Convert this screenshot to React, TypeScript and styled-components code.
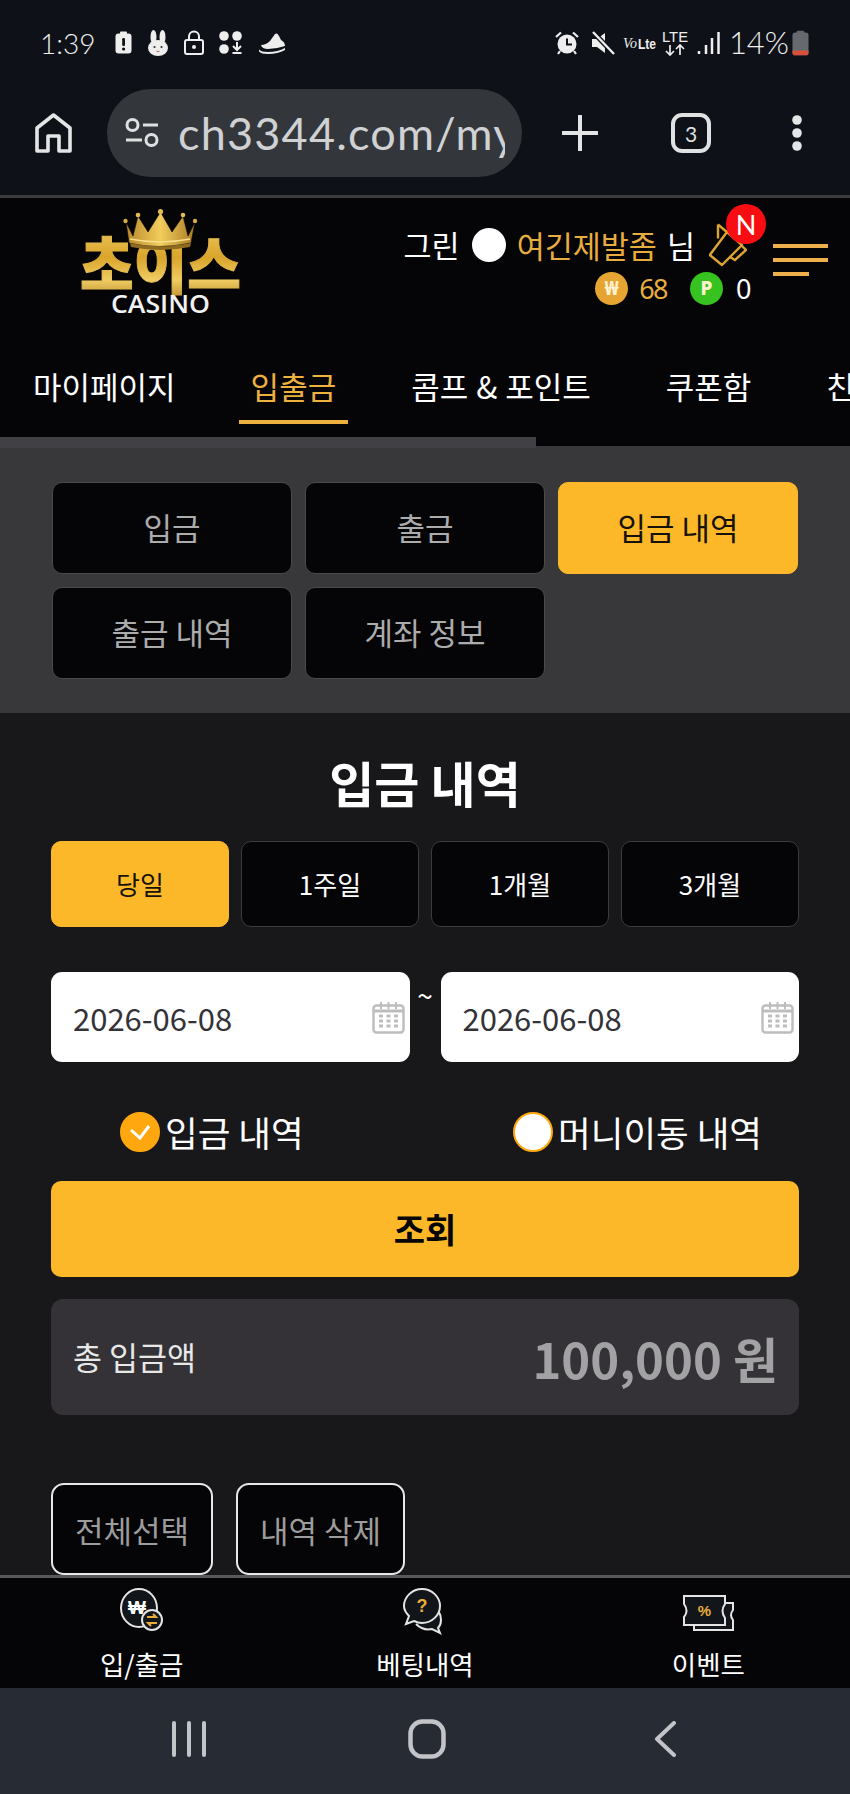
import React from 'react';
import styled, { createGlobalStyle } from 'styled-components';

const KR = `"Noto Sans CJK KR", "Noto Sans", sans-serif`;
const GOLD = '#fdb829';

const GlobalStyle = createGlobalStyle`
    html, body {
        margin: 0;
        padding: 0;
        background: #18171a;
    }
    * {
        box-sizing: border-box;
    }
`

const Page = styled.div`
    width: 850px;
    height: 1794px;
    display: flex;
    flex-direction: column;
    overflow: hidden;
    font-family: ${KR};
    color: #fff;
`

const StatusBar = styled.div`
    height: 89px;
    padding: 0 41px 4px 40px;
    background: #0e1117;
    display: flex;
    align-items: center;
    justify-content: space-between;
    font-family: "Lato", sans-serif;
    font-weight: 300;
    color: #f0f0f0;
`

const StatusLeft = styled.div`
    display: flex;
    align-items: center;
    gap: 15px;
`

const StatusRight = styled.div`
    display: flex;
    align-items: center;
    gap: 8px;
`

const Clock = styled.span`
    font-size: 28px;
    line-height: 1;
    margin-right: 5px;
`

const BatteryText = styled.span`
    font-size: 31px;
    line-height: 1;
    margin: 0 -5px 0 1px;
`

const Toolbar = styled.div`
    height: 109px;
    padding-left: 35px;
    background: #0e1117;
    border-bottom: 3px solid #3c3c3e;
    display: flex;
    align-items: flex-start;
`

const ToolRow = styled.div`
    height: 88px;
    display: flex;
    align-items: center;
`

const UrlPill = styled.div`
    width: 415px;
    height: 88px;
    margin: 0 40px 0 35px;
    padding: 0 17px 0 18px;
    border-radius: 44px;
    background: #33373c;
    display: flex;
    align-items: center;
    gap: 19px;
`

const UrlText = styled.div`
    flex: 1;
    overflow: hidden;
    white-space: nowrap;
    font-family: "Lato", sans-serif;
    font-weight: 400;
    font-size: 45px;
    letter-spacing: 1.2px;
    color: #cfd1d3;
`

const TabCount = styled.div`
    width: 40px;
    height: 40px;
    margin: 0 81px 0 73px;
    border: 4px solid #e0e1e3;
    border-radius: 11px;
    display: flex;
    align-items: center;
    justify-content: center;
    font-family: "Lato", sans-serif;
    font-size: 21px;
    color: #e0e1e3;
`

const Header = styled.header`
    background: #050507;
`

const TopRow = styled.div`
    height: 127px;
    padding: 7px 22px 0 66px;
    display: flex;
    align-items: flex-start;
`

const UserBlock = styled.div`
    margin: 18px 26px 0 auto;
    display: flex;
    flex-direction: column;
    align-items: flex-end;
    gap: 5px;
`

const UserRow = styled.div`
    height: 44px;
    display: flex;
    align-items: center;
    font-size: 30.5px;
    line-height: 1;
`

const Gold = styled.span`
    color: #e8ad3f;
`

const WhiteDot = styled.span`
    width: 34px;
    height: 34px;
    margin: 0 11px 0 12px;
    border-radius: 50%;
    background: #fff;
`

const Sir = styled.span`
    margin: 0 14px 0 10px;
`

const BellWrap = styled.div`
    position: relative;
    width: 38px;
    height: 44px;
`

const NewBadge = styled.span`
    position: absolute;
    top: -19px;
    left: 17px;
    width: 40px;
    height: 40px;
    border-radius: 50%;
    background: #f80e12;
    display: flex;
    align-items: center;
    justify-content: center;
    font-family: "Lato", sans-serif;
    font-size: 27px;
`

const CoinRow = styled.div`
    height: 33px;
    margin-right: -3px;
    display: flex;
    align-items: center;
    font-family: "Noto Sans", sans-serif;
    font-size: 27px;
    line-height: 1;
    letter-spacing: -1.5px;
`

const Coin = styled.span<{ $bg: string; $tight?: boolean }>`
    width: 33px;
    height: 33px;
    margin-right: ${(p) => (p.$tight ? '11px' : '13px')};
    border-radius: 50%;
    background: ${(p) => p.$bg};
    display: flex;
    align-items: center;
    justify-content: center;
    font-family: "Noto Sans", sans-serif;
    font-weight: 800;
    font-size: 19px;
    letter-spacing: 0;
    color: #fff2d0;
`

const CoinValue = styled.span<{ $gold?: boolean }>`
    min-width: 13px;
    color: ${(p) => (p.$gold ? '#e8ad3f' : '#fff')};
`

const CoinGap = styled.span`
    width: 23px;
`

const Burger = styled.div`
    margin-top: 39px;
    width: 55px;
    display: flex;
    flex-direction: column;
    gap: 10.5px;
`

const BurgerLine = styled.span<{ $short?: boolean }>`
    display: block;
    height: 3.5px;
    width: ${(p) => (p.$short ? '36px' : '55px')};
    background: #eeb04a;
`

const NavTabs = styled.nav`
    height: 112px;
    padding-left: 21px;
    display: flex;
    align-items: flex-start;
    gap: 51px;
    overflow: hidden;
    white-space: nowrap;
`

const NavTab = styled.div<{ $active?: boolean }>`
    height: 99px;
    padding: 25px 12px 0;
    flex: none;
    display: flex;
    align-items: center;
    border-bottom: 4px solid ${(p) => (p.$active ? '#eeb03f' : 'transparent')};
    font-size: 31px;
    line-height: 1;
    word-spacing: 1px;
    color: ${(p) => (p.$active ? '#eeb03f' : '#fff')};
`

const ScrollTrack = styled.div`
    height: 11px;
    display: flex;
    background: #38373a;
`

const ScrollThumb = styled.div`
    width: 536px;
    background: #414044;
`

const ScrollRest = styled.div`
    flex: 1;
    height: 9px;
    background: #050507;
`

const TabPanel = styled.div`
    padding: 34px 52px;
    background: #38373a;
    display: grid;
    grid-template-columns: repeat(3, 240px);
    grid-auto-rows: 92px;
    gap: 13px;
`

const TabButton = styled.div<{ $active?: boolean }>`
    padding-bottom: 3px;
    border-radius: 10px;
    border: 1.5px solid ${(p) => (p.$active ? GOLD : '#4a494c')};
    background: ${(p) => (p.$active ? GOLD : '#050407')};
    color: ${(p) => (p.$active ? '#16120a' : '#acacac')};
    display: flex;
    align-items: center;
    justify-content: center;
    font-size: 31px;
    line-height: 1;
`

const Main = styled.main`
    flex: 1;
    min-height: 0;
    overflow: hidden;
    padding: 0 51px;
    background: #18171a;
`

const Title = styled.h2`
    height: 128px;
    margin: 0;
    padding-top: 8px;
    display: flex;
    align-items: center;
    justify-content: center;
    font-size: 49px;
    font-weight: 700;
    line-height: 1;
`

const RangeRow = styled.div`
    height: 86px;
    display: grid;
    grid-template-columns: repeat(4, 1fr);
    gap: 12px;
`

const RangeButton = styled.div<{ $active?: boolean }>`
    border-radius: 10px;
    border: 1.5px solid ${(p) => (p.$active ? GOLD : '#3c3b3f')};
    background: ${(p) => (p.$active ? GOLD : '#050407')};
    color: ${(p) => (p.$active ? '#16120a' : '#fff')};
    display: flex;
    align-items: center;
    justify-content: center;
    font-size: 26px;
    line-height: 1;
`

const DateRow = styled.div`
    height: 90px;
    margin-top: 45px;
    display: grid;
    grid-template-columns: 1fr 31px 1fr;
`

const DateField = styled.div`
    border-radius: 11px;
    background: #fff;
    padding: 0 5px 0 22px;
    display: flex;
    align-items: center;
    justify-content: space-between;
    font-size: 31px;
    line-height: 1;
    color: #333237;
`

const Tilde = styled.span`
    padding-top: 9px;
    text-align: center;
    font-size: 28px;
    line-height: 1;
`

const RadioRow = styled.div`
    height: 40px;
    margin-top: 50px;
    padding: 0 37px 0 69px;
    display: flex;
    justify-content: space-between;
`

const RadioItem = styled.div`
    display: flex;
    align-items: center;
    gap: 5px;
    font-size: 35.5px;
    line-height: 1;
`

const RadioMark = styled.span<{ $on?: boolean }>`
    width: 40px;
    height: 40px;
    border-radius: 50%;
    background: ${(p) => (p.$on ? '#fea70f' : '#fff')};
    border: 2px solid #fea70f;
    display: flex;
    align-items: center;
    justify-content: center;
`

const SearchButton = styled.div`
    height: 96px;
    margin-top: 29px;
    border-radius: 10px;
    background: ${GOLD};
    color: #050505;
    display: flex;
    align-items: center;
    justify-content: center;
    font-size: 34px;
    font-weight: 700;
    line-height: 1;
`

const TotalBox = styled.div`
    height: 116px;
    margin-top: 22px;
    padding: 0 21px 0 22px;
    border-radius: 12px;
    background: #343236;
    display: flex;
    align-items: center;
    justify-content: space-between;
`

const TotalLabel = styled.span`
    font-size: 31.5px;
    line-height: 1;
    color: #e8e8e8;
`

const TotalValue = styled.span`
    font-size: 49px;
    font-weight: 700;
    line-height: 1;
    color: #a2a1a3;
`

const ActionRow = styled.div`
    margin-top: 68px;
    display: flex;
    gap: 23px;
`

const ActionButton = styled.div`
    height: 92px;
    padding: 0 22px;
    border: 2px solid #e8e8e8;
    border-radius: 13px;
    background: #050407;
    color: #9c9c9c;
    display: flex;
    align-items: center;
    font-size: 31px;
    line-height: 1;
`

const BottomNav = styled.nav`
    height: 113px;
    border-top: 3px solid #58575a;
    background: #050507;
    display: grid;
    grid-template-columns: repeat(3, 1fr);
`

const BottomItem = styled.div`
    padding-top: 10px;
    display: flex;
    flex-direction: column;
    align-items: center;
    font-size: 26.5px;
    line-height: 1;
`

const BottomIcon = styled.svg`
    display: block;
    width: 64px;
    height: 46px;
    margin-bottom: 17px;
    overflow: visible;
`

const SystemNav = styled.div`
    height: 106px;
    padding: 0 0 4px 172px;
    background: #272b33;
    display: flex;
    align-items: center;
    gap: 202px;
`

const SysIcon = styled.svg`
    display: block;
    flex: none;
`

const GoldIconText = styled.text`
    font-family: "Liberation Sans", sans-serif;
    font-weight: 700;
    fill: #e9ad3a;
`

const Logo = () => (
    <svg width="190" height="115" viewBox="66 205 190 115" style={{ display: 'block' }}>
        <defs>
            <linearGradient id="logoGold" x1="0" y1="0" x2="0" y2="1">
                <stop offset="0" stopColor="#f4d26a" />
                <stop offset="0.45" stopColor="#d9a52c" />
                <stop offset="0.7" stopColor="#f0cc62" />
                <stop offset="1" stopColor="#a8761a" />
            </linearGradient>
            <linearGradient id="crownGold" x1="0" y1="0" x2="1" y2="0">
                <stop offset="0" stopColor="#b9862a" />
                <stop offset="0.5" stopColor="#f2cd5c" />
                <stop offset="1" stopColor="#a97a22" />
            </linearGradient>
        </defs>
        <text
            x="80"
            y="289"
            textLength="161"
            lengthAdjust="spacingAndGlyphs"
            fontFamily={KR}
            fontWeight="900"
            fontSize="62"
            fill="url(#logoGold)"
            stroke="url(#logoGold)"
            strokeWidth="1"
        >
            초이스
        </text>
        <path d="M126 222l7 14 5-20 10 16 12.500-20 11.500 20 11-16 5 20 7-14-4 21q-33 7-62 0z" fill="url(#crownGold)" stroke="#050507" strokeWidth="0.600" />
        <path d="M130 239q30 6 60 0" fill="none" stroke="#f7df8c" strokeWidth="1.500" />
        <path d="M130 243q30 7 61 0l-1 4q-30 6-59 0z" fill="#8f6a1f" />
        <circle cx="160.500" cy="211.500" r="2.600" fill="#e2bb55" />
        <circle cx="138" cy="215" r="2.300" fill="#e2bb55" />
        <circle cx="183" cy="215" r="2.300" fill="#e2bb55" />
        <circle cx="125.500" cy="221" r="2.200" fill="#d6ac47" />
        <circle cx="195" cy="221" r="2.200" fill="#d6ac47" />
        <text
            x="111"
            y="313"
            textLength="99"
            lengthAdjust="spacingAndGlyphs"
            fontFamily="Open Sans, sans-serif"
            fontWeight="600"
            fontSize="25"
            fill="#f2f2f2"
        >
            CASINO
        </text>
    </svg>
);

const App = () => {
    return (
        <Page>
            <GlobalStyle />
            <StatusBar>
                <StatusLeft>
                    <Clock>1:39</Clock>
                    <svg width="17" height="23" viewBox="0 0 17 23">
                        <rect x="0.500" y="2.500" width="16" height="20" rx="3" fill="#eee" />
                        <rect x="5" y="0.500" width="7" height="3" rx="1" fill="#eee" />
                        <rect x="7.200" y="7" width="2.800" height="8" rx="1.200" fill="#0e1117" />
                        <circle cx="8.600" cy="18" r="1.600" fill="#0e1117" />
                    </svg>
                    <svg width="22" height="26" viewBox="0 0 22 26">
                        <ellipse cx="6.500" cy="7" rx="3" ry="7" fill="#eee" />
                        <ellipse cx="15.500" cy="7" rx="3" ry="7" fill="#eee" />
                        <ellipse cx="11" cy="18" rx="10" ry="8" fill="#eee" />
                        <circle cx="7.500" cy="17" r="1.100" fill="#333" />
                        <circle cx="14.500" cy="17" r="1.100" fill="#333" />
                        <path d="M9.500 21q1.500 1.400 3 0" stroke="#a66" strokeWidth="1" fill="none" />
                    </svg>
                    <svg width="20" height="25" viewBox="0 0 20 25">
                        <path d="M5 11V6.500a5 5 0 0 1 10 0V11" fill="none" stroke="#eee" strokeWidth="2" />
                        <rect x="1" y="10" width="18" height="14" rx="2" fill="none" stroke="#eee" strokeWidth="2" />
                        <circle cx="10" cy="17" r="2" fill="#eee" />
                    </svg>
                    <svg width="24" height="23" viewBox="0 0 24 23">
                        <circle cx="5" cy="5" r="4.800" fill="#eee" />
                        <circle cx="18" cy="5" r="4.800" fill="#eee" />
                        <circle cx="5" cy="18" r="4.800" fill="#eee" />
                        <path d="M18 11v7M14 15l4 4 4-4M13.500 22h9" stroke="#eee" strokeWidth="2" fill="none" />
                    </svg>
                    <svg width="28" height="22" viewBox="0 0 28 22">
                        <path d="M3 13Q8 13 12 9L17 2Q19 0.500 21 4L23 8Q27 10 27 14 18 17 10 17 4 17 3 13z" fill="#eee" />
                        <path d="M1 17.500Q3 20 10 20 20 20 27 16L27 18Q20 22 10 22 3 22 1 19.500z" fill="#eee" />
                    </svg>
                </StatusLeft>
                <StatusRight>
                    <svg width="24" height="24" viewBox="0 0 24 24">
                        <circle cx="12" cy="13" r="9.500" fill="#eee" />
                        <path d="M12 7.500V13.500h5" stroke="#0e1117" strokeWidth="2" fill="none" />
                        <path d="M1 6l5-4.500M23 6l-5-4.500M5 20l-2 3M19 20l2 3" stroke="#eee" strokeWidth="2.200" />
                    </svg>
                    <svg width="24" height="24" viewBox="0 0 24 24" style={{ marginLeft: 4 }}>
                        <path d="M1 8h5l8-6v20l-8-6H1z" fill="#eee" />
                        <path d="M2 1l21 22" stroke="#0e1117" strokeWidth="5" />
                        <path d="M2 1l21 22" stroke="#eee" strokeWidth="2.400" />
                    </svg>
                    <svg width="33" height="24" viewBox="0 0 33 24">
                        <text x="0" y="17" textLength="14" lengthAdjust="spacingAndGlyphs" fontFamily="Liberation Serif, serif" fontStyle="italic" fontSize="15" fill="#eee">Vo</text>
                        <text x="15" y="18" textLength="18" lengthAdjust="spacingAndGlyphs" fontFamily="Liberation Sans, sans-serif" fontWeight="700" fontSize="14" fill="#eee">Lte</text>
                    </svg>
                    <svg width="27" height="26" viewBox="0 0 27 26" style={{ marginLeft: -2 }}>
                        <text x="0" y="12" fontFamily="Liberation Sans, sans-serif" fontSize="14.500" textLength="26" lengthAdjust="spacingAndGlyphs" fill="#eee">LTE</text>
                        <path d="M8 15v10M4 21l4 4 4-4M18 25V15M14 19l4-4 4 4" stroke="#eee" strokeWidth="1.700" fill="none" />
                    </svg>
                    <svg width="23" height="24" viewBox="0 0 23 24">
                        <path d="M2 20v3M9 14v9M15 7v16M21.500 1v22" stroke="#eee" strokeWidth="2.500" />
                    </svg>
                    <BatteryText>14%</BatteryText>
                    <svg width="17" height="26" viewBox="0 0 18 26">
                        <rect x="5" y="0" width="8" height="3" rx="1" fill="#666" />
                        <rect x="0.500" y="2" width="17" height="24" rx="3" fill="#666a6e" />
                        <path d="M0.500 21h17v2a3 3 0 0 1-3 3h-11a3 3 0 0 1-3-3z" fill="#d9503a" />
                    </svg>
                </StatusRight>
            </StatusBar>

            <Toolbar>
                <ToolRow>
                    <svg width="37" height="40" viewBox="0 0 37 40">
                        <path d="M2 38V15L18.500 2 35 15v23H24V23H13v15z" fill="none" stroke="#e4e5e6" strokeWidth="3.600" strokeLinejoin="round" />
                    </svg>
                    <UrlPill>
                        <svg width="34" height="30" viewBox="0 0 34 30" style={{ flex: 'none' }}>
                            <circle cx="7.500" cy="7" r="5.500" fill="none" stroke="#dfe0e1" strokeWidth="3" />
                            <path d="M18 7h15M1 22h16" stroke="#dfe0e1" strokeWidth="3" />
                            <circle cx="26.500" cy="22" r="5.500" fill="none" stroke="#dfe0e1" strokeWidth="3" />
                        </svg>
                        <UrlText>ch3344.com/my</UrlText>
                    </UrlPill>
                    <svg width="36" height="36" viewBox="0 0 36 36">
                        <path d="M18 1v34M1 18h34" stroke="#e4e5e6" strokeWidth="4" strokeLinecap="round" />
                    </svg>
                    <TabCount>3</TabCount>
                    <svg width="10" height="36" viewBox="0 0 10 36">
                        <circle cx="5" cy="5" r="4.800" fill="#e4e5e6" />
                        <circle cx="5" cy="18" r="4.800" fill="#e4e5e6" />
                        <circle cx="5" cy="31" r="4.800" fill="#e4e5e6" />
                    </svg>
                </ToolRow>
            </Toolbar>

            <Header>
                <TopRow>
                    <Logo />
                    <UserBlock>
                        <UserRow>
                            그린
                            <WhiteDot />
                            <Gold>여긴제발좀</Gold>
                            <Sir>님</Sir>
                            <BellWrap>
                                <svg width="38" height="44" viewBox="0 0 38 44">
                                    <path d="M0.800 32L18 9l15 13-20 20z" fill="none" stroke="#dca431" strokeWidth="2.400" strokeLinejoin="round" />
                                    <path d="M9 1.500v14M9 1.500L19 10" fill="none" stroke="#dca431" strokeWidth="2.400" />
                                    <path d="M21 34l5 3 11-10-5-5" fill="none" stroke="#dca431" strokeWidth="2.400" />
                                </svg>
                                <NewBadge>N</NewBadge>
                            </BellWrap>
                        </UserRow>
                        <CoinRow>
                            <Coin $bg="#e6a432" $tight>₩</Coin>
                            <CoinValue $gold>68</CoinValue>
                            <CoinGap />
                            <Coin $bg="#36c31f">P</Coin>
                            <CoinValue>0</CoinValue>
                        </CoinRow>
                    </UserBlock>
                    <Burger>
                        <BurgerLine />
                        <BurgerLine />
                        <BurgerLine $short />
                    </Burger>
                </TopRow>
                <NavTabs>
                    <NavTab>마이페이지</NavTab>
                    <NavTab $active>입출금</NavTab>
                    <NavTab>콤프 &amp; 포인트</NavTab>
                    <NavTab>쿠폰함</NavTab>
                    <NavTab>친구추천</NavTab>
                </NavTabs>
                <ScrollTrack>
                    <ScrollThumb />
                    <ScrollRest />
                </ScrollTrack>
            </Header>

            <TabPanel>
                <TabButton>입금</TabButton>
                <TabButton>출금</TabButton>
                <TabButton $active>입금 내역</TabButton>
                <TabButton>출금 내역</TabButton>
                <TabButton>계좌 정보</TabButton>
            </TabPanel>

            <Main>
                <Title>입금 내역</Title>
                <RangeRow>
                    <RangeButton $active>당일</RangeButton>
                    <RangeButton>1주일</RangeButton>
                    <RangeButton>1개월</RangeButton>
                    <RangeButton>3개월</RangeButton>
                </RangeRow>
                <DateRow>
                    {['from', 'to'].map((key, i) => (
                        <React.Fragment key={key}>
                            <DateField>
                                2026-06-08
                                <svg width="33" height="33" viewBox="0 0 33 33">
                                    <rect x="1.500" y="4.500" width="30" height="27" rx="3" fill="none" stroke="#bdbdbd" strokeWidth="2.400" />
                                    <path d="M1.500 10h30" stroke="#bdbdbd" strokeWidth="3" />
                                    <path d="M9 1v7M16.500 1v7M24 1v7" stroke="#bdbdbd" strokeWidth="2" />
                                    <path d="M7 15h4M14.500 15h4M22 15h4M7 20h4M14.500 20h4M22 20h4M7 25h4M14.500 25h4M22 25h4" stroke="#bdbdbd" strokeWidth="3" />
                                </svg>
                            </DateField>
                            {i === 0 && <Tilde>~</Tilde>}
                        </React.Fragment>
                    ))}
                </DateRow>
                <RadioRow>
                    <RadioItem>
                        <RadioMark $on>
                            <svg width="22" height="16" viewBox="0 0 22 16">
                                <path d="M2 6l9 8L20 2" fill="none" stroke="#fff" strokeWidth="3" />
                            </svg>
                        </RadioMark>
                        입금 내역
                    </RadioItem>
                    <RadioItem>
                        <RadioMark />
                        머니이동 내역
                    </RadioItem>
                </RadioRow>
                <SearchButton>조회</SearchButton>
                <TotalBox>
                    <TotalLabel>총 입금액</TotalLabel>
                    <TotalValue>100,000 원</TotalValue>
                </TotalBox>
                <ActionRow>
                    <ActionButton>전체선택</ActionButton>
                    <ActionButton>내역 삭제</ActionButton>
                </ActionRow>
            </Main>

            <BottomNav>
                <BottomItem>
                    <BottomIcon viewBox="0 0 64 46">
                        <g transform="translate(-1 0)">
                            <ellipse cx="30" cy="20" rx="18" ry="19" fill="#12161a" stroke="#e4e4e4" strokeWidth="2" />
                            <circle cx="43" cy="32" r="10" fill="#12161a" stroke="#e4e4e4" strokeWidth="2" />
                            <text x="28" y="26" textAnchor="middle" fontFamily="Liberation Sans, sans-serif" fontWeight="700" fontSize="19" fill="#fff">₩</text>
                            <path d="M38 29h9l-3-3M48 35h-9l3 3" fill="none" stroke="#e9ad3a" strokeWidth="2" />
                        </g>
                    </BottomIcon>
                    입/출금
                </BottomItem>
                <BottomItem>
                    <BottomIcon viewBox="0 0 64 46">
                        <g transform="translate(-3 0)">
                            <path d="M41 18q10 4 10 14 0 5-3 8l2 5-8-4q-9 2-16-5" fill="#12161a" stroke="#e4e4e4" strokeWidth="2" />
                            <path d="M32 1c10 0 18 8 18 17s-8 17-18 17q-4 0-8-2l-8 3 3-8q-5-5-5-10C14 9 22 1 32 1z" fill="#12161a" stroke="#e4e4e4" strokeWidth="2" />
                            <GoldIconText x="32" y="24" textAnchor="middle" fontSize="18">?</GoldIconText>
                        </g>
                    </BottomIcon>
                    베팅내역
                </BottomItem>
                <BottomItem>
                    <BottomIcon viewBox="0 0 64 46">
                        <path d="M18 15h39v7q-4 5 0 10v10H18z" fill="#12161a" stroke="#e4e4e4" strokeWidth="2" />
                        <g transform="translate(-3 2)">
                            <path d="M11 6h41v8q-5 7 0 14v7H11v-8q5-6 0-13z" fill="#12161a" stroke="#e4e4e4" strokeWidth="2" />
                            <GoldIconText x="31.500" y="26" textAnchor="middle" fontSize="15">%</GoldIconText>
                        </g>
                    </BottomIcon>
                    이벤트
                </BottomItem>
            </BottomNav>

            <SystemNav>
                <SysIcon width="34" height="36" viewBox="0 0 34 36">
                    <path d="M2 2v32M17 2v32M32 2v32" stroke="#c2c4c8" strokeWidth="4" strokeLinecap="round" />
                </SysIcon>
                <SysIcon width="38" height="40" viewBox="0 0 38 40">
                    <rect x="2.500" y="2.500" width="33" height="35" rx="12" fill="none" stroke="#c2c4c8" strokeWidth="4.500" />
                </SysIcon>
                <SysIcon width="22" height="36" viewBox="0 0 22 36" style={{ marginLeft: 6 }}>
                    <path d="M20 2L3 18l17 16" fill="none" stroke="#c2c4c8" strokeWidth="4" strokeLinecap="round" strokeLinejoin="round" />
                </SysIcon>
            </SystemNav>
        </Page>
    );
};

export default App;
